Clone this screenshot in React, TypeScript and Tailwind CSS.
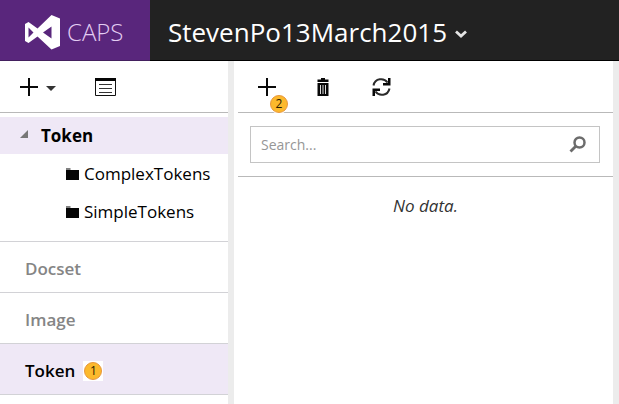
import React from "react";

function PlusIcon() {
  return (
    <svg width="18" height="18" viewBox="0 0 18 18" aria-hidden="true">
      <path d="M8 0h2v8h8v2h-8v8H8v-8H0V8h8z" fill="#0a0a0a" />
    </svg>
  );
}

function Logo() {
  return (
    <svg width="35" height="35" viewBox="0 0 35 35" aria-hidden="true">
      <path
        fillRule="evenodd"
        fill="#fff"
        d="M0 9 3.500 7 12.500 13.500 26.500 0 35 3.500V31L26.500 34.500 12.500 21.500 3.500 28 0 26zM3.500 12.500V22.500L8.500 17.500zM26.500 11.500 18 17.500 26.500 23.500z"
      />
    </svg>
  );
}

function FolderIcon() {
  return (
    <svg width="13" height="12" viewBox="0 0 13 12" aria-hidden="true" className="shrink-0">
      <path d="M0 0.500h4.500v1H0zM0 2h13v10H0z" fill="#050505" />
    </svg>
  );
}

function Badge({ label }: { label: string }) {
  return (
    <span className="flex size-[18px] items-center justify-center rounded-full border border-[#e8963c] bg-[#fcb92c] text-xs leading-4 font-normal text-[#2a1c00]">
      {label}
    </span>
  );
}

const folders = ["ComplexTokens", "SimpleTokens"];
const sections = ["Docset", "Image", "Token"];

export default function App() {
  return (
    <div className="flex min-h-screen flex-col bg-white font-['Open_Sans','Noto_Sans',sans-serif] text-black">
      <header className="flex h-[61px] border-b border-black bg-[#222222]">
        <a
          href="#home"
          className="-mb-px flex w-[150px] shrink-0 items-center gap-[7px] border-b border-[#43205f] bg-[#59267c] pt-1 pl-[25px] text-2xl font-light text-[#e3cdf2]"
        >
          <Logo />
          CAPS
        </a>
        <button type="button" className="flex items-center gap-2 pt-1 pl-[18px] text-[26px] text-white">
          StevenPo13March2015
          <svg width="12" height="8" viewBox="0 0 12 8" aria-hidden="true" className="mt-1">
            <path d="M1 1.500 6 6 11 1.500" fill="none" stroke="#e4e4e4" strokeWidth="2.800" />
          </svg>
        </button>
      </header>

      <div className="flex grow">
        <aside className="w-[228px] shrink-0">
          <div className="flex h-[52px] items-center gap-[39px] border-b border-[#b9b9b9] pl-5">
            <button type="button" aria-label="Add" className="flex items-center gap-2">
              <PlusIcon />
              <svg width="10" height="5" viewBox="0 0 10 5" aria-hidden="true" className="mt-1">
                <path d="M0 0h10L5 5z" fill="#333" />
              </svg>
            </button>
            <button type="button" aria-label="Properties">
              <svg width="21" height="18" viewBox="0 0 21 18" aria-hidden="true">
                <path d="M.5.500h20v17H.5z" fill="#fff" stroke="#111" />
                <path d="M0 0h21v3H0z" fill="#050505" />
                <path d="M4 6.500h13M4 10.500h13M4 14.500h13" stroke="#333" />
              </svg>
            </button>
          </div>

          <nav className="pt-1 pb-[11px]">
            <button type="button" className="flex h-[37px] w-full items-center gap-[13px] bg-[#efe8f6] pt-px pl-5 text-[17px] font-bold">
              <svg width="8" height="8" viewBox="0 0 8 8" aria-hidden="true" className="-mt-1">
                <path d="M8 0v8H0z" fill="#777" />
              </svg>
              Token
            </button>
            <ul>
              {folders.map((name) => (
                <li key={name}>
                  <a href={"#" + name} className="flex h-[38px] items-center gap-[5px] pt-px pl-[66px] text-[17px]">
                    <FolderIcon />
                    {name}
                  </a>
                </li>
              ))}
            </ul>
          </nav>

          <ul className="border-b border-[#d2d2d6]">
            {sections.map((name) => (
              <li key={name}>
                <a
                  href={"#section-" + name}
                  className={
                    "flex h-[51px] items-center gap-2 border-t border-[#d2d2d6] pt-1 pl-[25px] text-[17px] font-semibold " +
                    (name === "Token" ? "bg-[#efe8f6] text-black" : "text-[#858585]")
                  }
                >
                  {name}
                  {name === "Token" && (
                    <span className="bg-white p-px">
                      <Badge label="1" />
                    </span>
                  )}
                </a>
              </li>
            ))}
          </ul>
        </aside>

        <main className="grow border-x-[6px] border-[#ececec] pl-1">
          <div className="flex h-[52px] items-center border-b border-[#b9b9b9] pl-5">
            <button type="button" aria-label="Add token" className="relative">
              <PlusIcon />
              <span className="absolute top-4 left-[11px] rounded-full bg-white p-px">
                <Badge label="2" />
              </span>
            </button>
            <button type="button" aria-label="Delete" className="ml-[41px]">
              <svg width="12" height="18" viewBox="0 0 12 18" aria-hidden="true">
                <path d="M4 0h4v1.500h3.500V4H.5V1.500H4z" fill="#080808" />
                <path d="M.5 5h11v13H.5z" fill="#080808" />
                <path d="M3.500 7v9M6 7v9M8.500 7v9" stroke="#ddd" strokeWidth="1" />
              </svg>
            </button>
            <button type="button" aria-label="Refresh" className="ml-[43px]">
              <svg width="19" height="18" viewBox="0 0 19 18" aria-hidden="true">
                <path d="M1.500 7.500C3 0 12 -.5 15.500 4.500M17.500 10.500C16 18 7 18.500 3.500 13.500" fill="none" stroke="#2a2a2a" strokeWidth="2" />
                <path d="M18.500 0v7.500H11V5h4.500l.5-1V0zM.5 18v-7.500H8V13H3.500l-.5 1v4z" fill="#080808" />
              </svg>
            </button>
          </div>

          <div className="border-b border-[#b9b9b9] py-[13px] pr-[13px] pl-3">
            <label className="flex h-[37px] items-center border border-[#c4c4c4] pr-[13px] pl-[10px]">
              <input
                type="search"
                aria-label="Search"
                placeholder="Search..."
                className="min-w-0 grow text-sm outline-none placeholder:text-[#969696]"
              />
              <svg width="17" height="17" viewBox="0 0 17 17" aria-hidden="true">
                <circle cx="10.500" cy="6.500" r="5" fill="none" stroke="#6c6c6c" strokeWidth="2.500" />
                <path d="M7 10 1.500 15.500" stroke="#6c6c6c" strokeWidth="2.800" />
              </svg>
            </label>
          </div>

          <p className="pt-[17px] text-center text-[17px] leading-6 text-[#333] italic">No data.</p>
        </main>
      </div>
    </div>
  );
}
